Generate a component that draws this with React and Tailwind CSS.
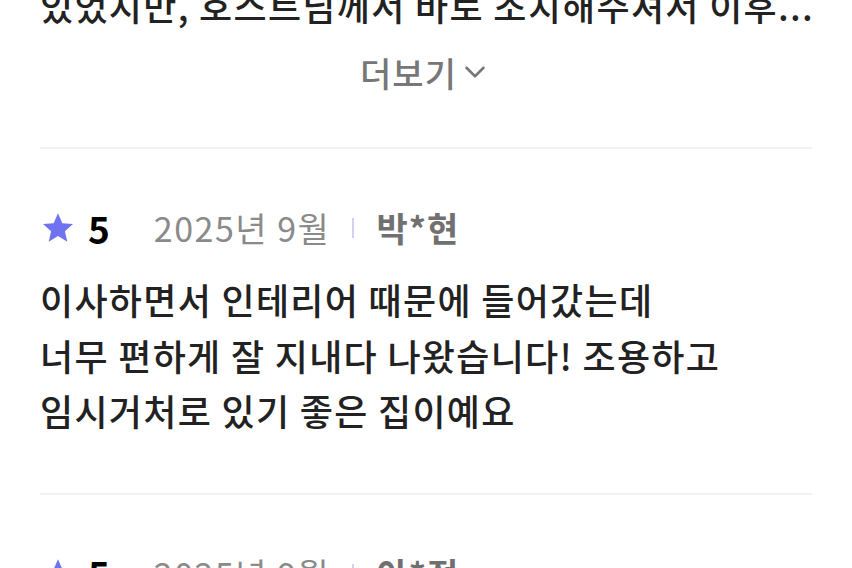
import { ChevronDown } from 'lucide-react';

const font = { fontFamily: '"Noto Sans CJK KR", "Noto Sans", sans-serif' };

const Star = () => (
    <svg viewBox="0 0 24 24" className="w-[36px] h-[36px] shrink-0" fill="#7073f0">
        <path d="M12 2.2l2.9 6.6 7.1.6-5.4 4.7 1.6 7-6.2-3.7-6.2 3.7 1.6-7L2 9.4l7.1-.6z" />
    </svg>
);

const RatingRow = ({ score, date, name }) => (
    <div className="flex items-center h-[40px]">
        <Star />
        <span className="ml-[12px] text-[37px] font-bold text-black leading-none">{score}</span>
        <span className="ml-[44px] text-[34px] tracking-[1.5px] text-[#8a8a8a] leading-none">{date}</span>
        <span className="ml-[22px] w-[2px] h-[20px] bg-[#d6d0ef]" />
        <span className="ml-[22px] text-[34px] tracking-[1px] font-semibold text-[#707070] leading-none">{name}</span>
    </div>
);

const Divider = ({ className }) => <div className={`h-[2px] bg-[#f2f2f2] ${className}`} />;

export default function App() {
    return (
        <div className="w-[852px] h-[568px] overflow-hidden bg-white" style={font}>
            <div className="px-[40px] -mt-[22px]">
                {/* previous review, tail end */}
                <p className="text-[36px] tracking-[1.3px] font-medium text-[#222] leading-[55px] whitespace-nowrap">
                    있었지만, 호스트님께서 바로 조치해주셔서 이후...
                </p>
                <button className="mt-[19px] w-full flex items-center justify-center h-[40px] text-[34px] tracking-[1px] font-medium text-[#777]">
                    더보기
                    <ChevronDown className="w-[34px] h-[34px] ml-[1px]" strokeWidth={1.8} />
                </button>
                <Divider className="mt-[55px]" />

                {/* review */}
                <div className="mt-[59px]">
                    <RatingRow score="5" date="2025년 9월" name="박*현" />
                </div>
                <p className="mt-[24px] text-[36px] tracking-[1.3px] font-medium text-[#222] leading-[55.5px]">
                    이사하면서 인테리어 때문에 들어갔는데
                    <br />
                    너무 편하게 잘 지내다 나왔습니다! 조용하고
                    <br />
                    임시거처로 있기 좋은 집이예요
                </p>
                <Divider className="mt-[54px]" />

                <div className="mt-[59px]">
                    <RatingRow score="5" date="2025년 9월" name="아*정" />
                </div>
            </div>
        </div>
    );
}
